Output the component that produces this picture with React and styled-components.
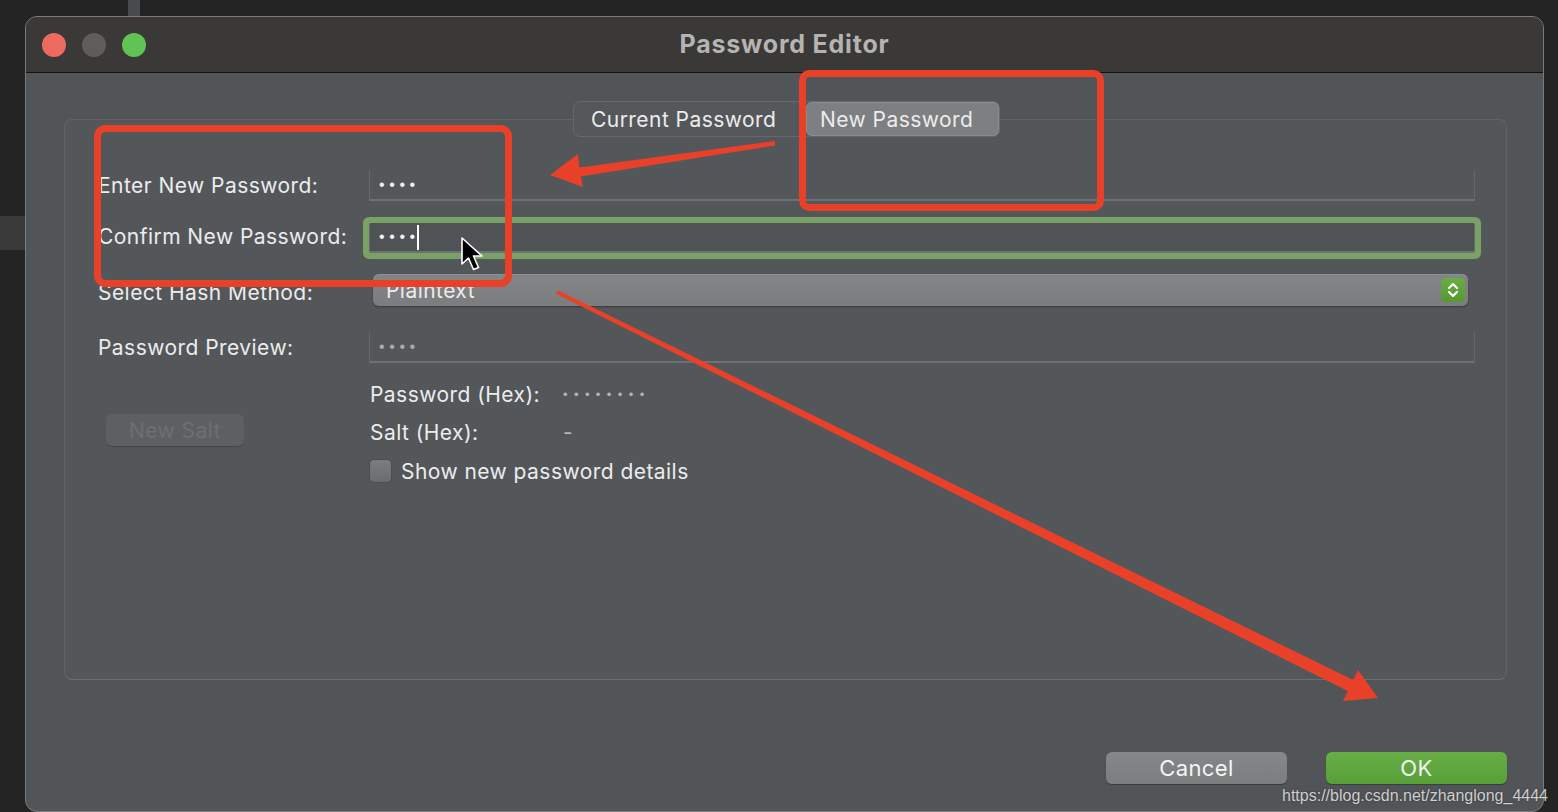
import styled, { createGlobalStyle } from 'styled-components';

const GlobalStyle = createGlobalStyle`
  html, body {
    margin: 0;
    padding: 0;
    background: #242424;
    overflow: hidden;
  }
  body {
    font-family: Inter, 'Liberation Sans', sans-serif;
  }
`;

const RED = '#e9402a';

const Page = styled.div`
  position: relative;
  width: 1558px;
  height: 812px;
  display: flex;
  overflow: hidden;
  background: #242424;
  font-size: 21px;
  letter-spacing: 0.45px;
`;

const Desk = styled.div`
  width: 25px;
  flex: none;
  padding-top: 216px;
`;

const DeskStrip = styled.div`
  height: 34px;
  background: #3a3a3a;
`;

const WindowColumn = styled.div`
  display: flex;
  flex-direction: column;
`;

const TopGap = styled.div`
  height: 16px;
  padding-left: 103px;
`;

const TopBar = styled.div`
  width: 12px;
  height: 16px;
  background: #4a4b4d;
`;

const Window = styled.div`
  width: 1519px;
  height: 800px;
  box-sizing: border-box;
  border: 1px solid #7b7b7b;
  border-radius: 12px;
  overflow: hidden;
  background: #525558;
  display: flex;
  flex-direction: column;
`;

const TitleBar = styled.div`
  height: 55px;
  flex: none;
  background: #3a3937;
  border-bottom: 1px solid #121212;
  display: grid;
  grid-template-columns: 1fr auto 1fr;
  align-items: center;
  padding: 0 16px;
`;

const Lights = styled.div`
  display: flex;
  gap: 16px;
`;

const Light = styled.span`
  width: 24px;
  height: 24px;
  border-radius: 50%;
  background: ${(p) => p.$color};
`;

const Title = styled.div`
  font-size: 25px;
  font-weight: 700;
  color: #b4b4b2;
  letter-spacing: 0.8px;
  margin-top: -2px;
`;

const Body = styled.div`
  flex: 1;
  display: flex;
  flex-direction: column;
  padding: 28px 36px 0 38px;
`;

const Tabs = styled.div`
  align-self: center;
  position: relative;
  z-index: 1;
  display: flex;
  height: 36px;
  box-sizing: border-box;
  margin-bottom: -18px;
  border: 1px solid #66696c;
  border-radius: 7px;
  background: #55585b;
  margin-left: 2px;
`;

const Tab = styled.div`
  display: flex;
  align-items: center;
  padding-left: ${(p) => (p.$active ? '14px' : '17px')};
  width: ${(p) => p.$w}px;
  box-sizing: border-box;
  color: #ececec;
  white-space: nowrap;
  border-radius: 6px;
  background: ${(p) => (p.$active ? '#7d7f81' : 'transparent')};
  box-shadow: ${(p) => (p.$active ? 'inset 0 0 0 1px #898b8d' : 'none')};
`;

const Group = styled.div`
  height: 561px;
  box-sizing: border-box;
  border: 1px solid #606366;
  border-bottom-color: #6c6f72;
  border-radius: 8px;
  background: #54575a;
  padding: 50px 31px 0 33px;
`;

const Row = styled.div`
  display: grid;
  grid-template-columns: 271px 1fr;
  align-items: center;
  height: ${(p) => p.$h}px;
  margin-top: ${(p) => p.$top || 0}px;
`;

const Label = styled.div`
  color: #ececec;
  white-space: nowrap;
  transform: translateY(${(p) => p.$dy || 0}px);
`;

const Field = styled.div`
  height: 100%;
  box-sizing: border-box;
  display: flex;
  align-items: center;
  padding-left: 9px;
  border-left: 1px solid #65686b;
  border-right: 1px solid #65686b;
  border-bottom: 2px solid #6e7174;
  background: ${(p) => (p.$focus ? '#505356' : 'transparent')};
  border-radius: ${(p) => (p.$focus ? '2px' : '0')};
  box-shadow: ${(p) => (p.$focus ? '0 0 0 6px #7aa267' : 'none')};
`;

const Dots = styled.span`
  font-family: 'Liberation Sans', sans-serif;
  font-size: ${(p) => p.$size || 16}px;
  letter-spacing: ${(p) => p.$gap || 4.6}px;
  color: ${(p) => p.$color || '#f0f0f0'};
  line-height: 1;
`;

const Caret = styled.span`
  width: 2px;
  height: 25px;
  background: #ffffff;
  margin-left: -3px;
`;

const PopUp = styled.div`
  height: 100%;
  margin: 0 7px 0 4px;
  box-sizing: border-box;
  border-radius: 6px;
  background: linear-gradient(#838587, #7a7c7e);
  box-shadow: 0 1px 2px rgba(0, 0, 0, 0.35), inset 0 1px 0 #8d8f91;
  display: flex;
  align-items: center;
  justify-content: space-between;
  padding: 0 3px 0 13px;
  color: #ececec;
`;

const Stepper = styled.span`
  width: 24px;
  height: 24px;
  border-radius: 5px;
  background: linear-gradient(#68ad45, #55992f);
  display: flex;
  align-items: center;
  justify-content: center;
`;

const Details = styled.div`
  display: grid;
  grid-template-columns: 271px 1fr;
  margin-top: 19px;
`;

const SaltButton = styled.button`
  align-self: start;
  margin: 32px 0 0 8px;
  width: 138px;
  height: 32px;
  border: none;
  border-radius: 6px;
  background: #5d6063;
  box-shadow: 0 1px 1px rgba(0, 0, 0, 0.2);
  font-family: inherit;
  font-size: 21px;
  letter-spacing: 0.45px;
  color: #6c6f72;
`;

const HexList = styled.div`
  display: flex;
  flex-direction: column;
`;

const HexRow = styled.div`
  display: grid;
  grid-template-columns: 193px 1fr;
  align-items: center;
  height: 24px;
  margin-top: ${(p) => p.$top || 0}px;
  padding-left: 1px;
  color: #ececec;
  white-space: nowrap;
`;

const Dash = styled.span`
  color: #b8babc;
`;

const CheckRow = styled.label`
  display: flex;
  align-items: center;
  height: 24px;
  margin-top: 15px;
  gap: 9px;
  color: #ececec;
  white-space: nowrap;
`;

const CheckBox = styled.span`
  width: 23px;
  height: 24px;
  box-sizing: border-box;
  border-radius: 5px;
  border: 1px solid #4b4e51;
  background: linear-gradient(#7a7d7f, #6a6d6f);
`;

const Footer = styled.div`
  display: flex;
  justify-content: flex-end;
  gap: 39px;
  margin-top: 72px;
`;

const Button = styled.button`
  width: 181px;
  height: 32px;
  border: none;
  border-radius: 6px;
  font-family: inherit;
  font-size: 22px;
  letter-spacing: 0.4px;
  color: #f4f4f4;
  background: ${(p) =>
    p.$primary ? 'linear-gradient(#67ae46, #579f36)' : 'linear-gradient(#85878a, #7b7d7f)'};
  box-shadow: 0 1px 1px rgba(0, 0, 0, 0.3);
`;

const Overlay = styled.svg`
  position: absolute;
  left: 0;
  top: 0;
  z-index: 10;
  pointer-events: none;
`;

const Watermark = styled.div`
  position: absolute;
  right: 10px;
  bottom: 7px;
  z-index: 11;
  font-family: 'Liberation Sans', sans-serif;
  font-size: 16px;
  letter-spacing: 0;
  color: rgba(235, 235, 235, 0.85);
  text-shadow: 0 0 2px rgba(0, 0, 0, 0.5);
`;

function StepperIcon() {
  return (
    <svg width="14" height="18" viewBox="0 0 14 18">
      <path d="M3 7 L7 3 L11 7 M3 11 L7 15 L11 11" fill="none" stroke="#fff" strokeWidth="2.2" strokeLinecap="round" strokeLinejoin="round" />
    </svg>
  );
}

function Annotations() {
  return (
    <Overlay width="1558" height="812" viewBox="0 0 1558 812">
      <rect x="97.5" y="128.5" width="411" height="155" rx="8" fill="none" stroke={RED} strokeWidth="7" />
      <rect x="802.5" y="73.5" width="298" height="134" rx="7" fill="none" stroke={RED} strokeWidth="7" />
      <polygon
        points="774.7,141 775.3,145.5 580.7,176.5 583,187 550,175 578,154 579.3,167.5"
        fill={RED}
      />
      <polygon
        points="557.9,290.2 1353.2,680.1 1358,670 1378,698 1343,701 1347.8,690.9 556.1,293.8"
        fill={RED}
      />
      <path
        d="M462 238 L462 264 L468.5 258 L473.5 269.5 L478.5 267.5 L473.5 256 L482 256 Z"
        fill="#000"
        stroke="#fff"
        strokeWidth="1.6"
        strokeLinejoin="round"
      />
    </Overlay>
  );
}

export default function App() {
  return (
    <>
      <GlobalStyle />
      <Page>
        <Desk>
          <DeskStrip />
        </Desk>
        <WindowColumn>
          <TopGap>
            <TopBar />
          </TopGap>
          <Window>
            <TitleBar>
              <Lights>
                <Light $color="#ee6a5f" />
                <Light $color="#5f5d5b" />
                <Light $color="#5fc454" />
              </Lights>
              <Title>Password Editor</Title>
              <span />
            </TitleBar>
            <Body>
              <Tabs>
                <Tab $w={232}>Current Password</Tab>
                <Tab $w={193} $active>New Password</Tab>
              </Tabs>
              <Group>
                <Row $h={31}>
                  <Label>Enter New Password:</Label>
                  <Field>
                    <Dots>••••</Dots>
                  </Field>
                </Row>
                <Row $h={30} $top={22}>
                  <Label $dy={-2}>Confirm New Password:</Label>
                  <Field $focus>
                    <Dots>••••</Dots>
                    <Caret />
                  </Field>
                </Row>
                <Row $h={32} $top={21}>
                  <Label $dy={2}>Select Hash Method:</Label>
                  <PopUp>
                    <span>Plaintext</span>
                    <Stepper>
                      <StepperIcon />
                    </Stepper>
                  </PopUp>
                </Row>
                <Row $h={31} $top={26}>
                  <Label>Password Preview:</Label>
                  <Field>
                    <Dots $color="#a9abad">••••</Dots>
                  </Field>
                </Row>
                <Details>
                  <SaltButton disabled>New Salt</SaltButton>
                  <HexList>
                    <HexRow>
                      <span>Password (Hex):</span>
                      <Dots $size={13} $gap={6.4} $color="#b4b6b8">••••••••</Dots>
                    </HexRow>
                    <HexRow $top={14}>
                      <span>Salt (Hex):</span>
                      <Dash>-</Dash>
                    </HexRow>
                    <CheckRow>
                      <CheckBox />
                      Show new password details
                    </CheckRow>
                  </HexList>
                </Details>
              </Group>
              <Footer>
                <Button>Cancel</Button>
                <Button $primary>OK</Button>
              </Footer>
            </Body>
          </Window>
        </WindowColumn>
        <Annotations />
        <Watermark>https://blog.csdn.net/zhanglong_4444</Watermark>
      </Page>
    </>
  );
}
